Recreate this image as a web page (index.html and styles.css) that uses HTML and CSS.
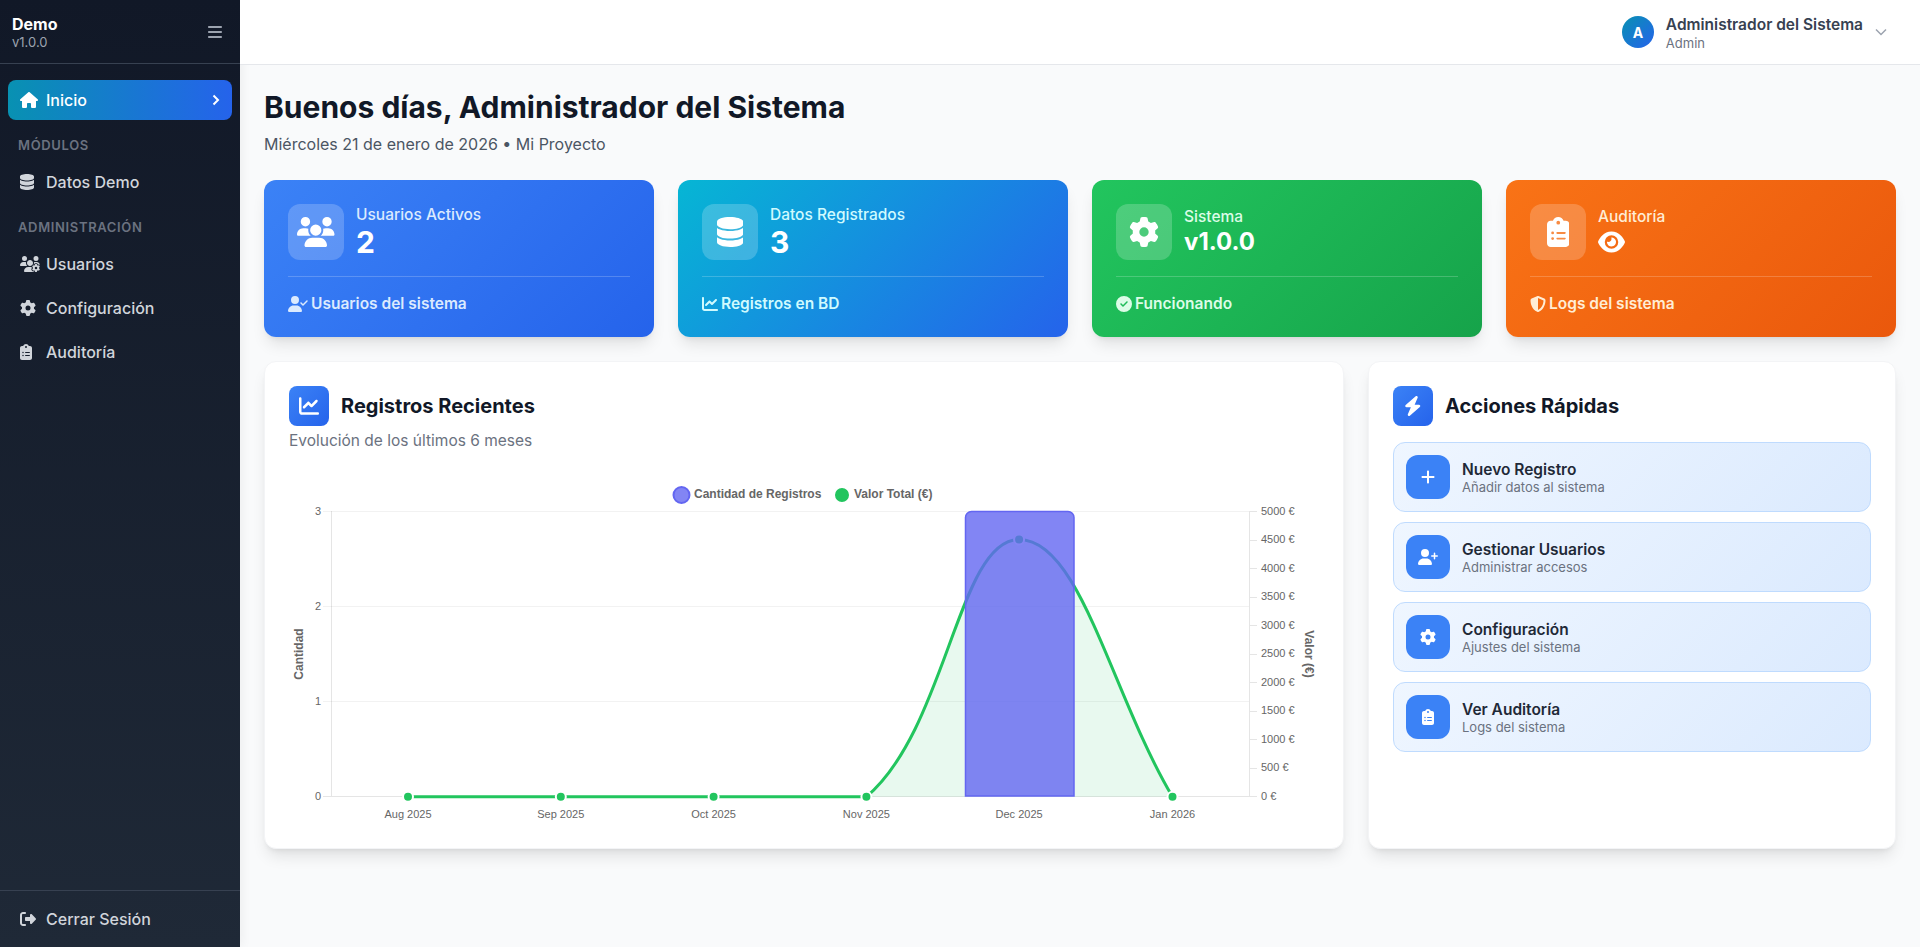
FILE: index.html
```html
<!DOCTYPE html>
<html lang="es">
<head>
    <meta charset="UTF-8">
    <meta name="viewport" content="width=device-width, initial-scale=1.0">
    <title>Demo - Inicio</title>
    <link rel="stylesheet" href="styles.css">
</head>
<body>
    <!-- icon shapes, reused below with <use> -->
    <svg class="sprite" aria-hidden="true">
        <defs>
            <path id="i-bars" d="M0 96C0 78.3 14.3 64 32 64H416c17.7 0 32 14.3 32 32s-14.3 32-32 32H32C14.3 128 0 113.7 0 96zM0 256c0-17.7 14.3-32 32-32H416c17.7 0 32 14.3 32 32s-14.3 32-32 32H32c-17.7 0-32-14.3-32-32zM448 416c0 17.7-14.3 32-32 32H32c-17.7 0-32-14.3-32-32s14.3-32 32-32H416c17.7 0 32 14.3 32 32z"/>
            <path id="i-home" d="M575.8 255.5c0 18-15 32.1-32 32.1h-32l.7 160.2c0 2.7-.2 5.4-.5 8.1V472c0 22.1-17.9 40-40 40H456c-1.1 0-2.2 0-3.3-.1c-1.4 .1-2.8 .1-4.2 .1H416 392c-22.1 0-40-17.9-40-40V448 384c0-17.7-14.3-32-32-32H256c-17.7 0-32 14.3-32 32v64 24c0 22.1-17.9 40-40 40H160 128.1c-1.5 0-3-.1-4.5-.2c-1.2 .1-2.4 .2-3.6 .2H104c-22.1 0-40-17.9-40-40V360c0-.9 0-1.9 .1-2.8V287.6H32c-18 0-32-14-32-32.1c0-9 3-17 10-24L266.4 8c7-7 15-8 22-8s15 2 21 7L564.8 231.5c8 7 12 15 11 24z"/>
            <path id="i-database" d="M448 80v48c0 44.2-100.3 80-224 80S0 172.2 0 128V80C0 35.8 100.3 0 224 0S448 35.8 448 80zM393.2 214.7c20.8-7.4 39.9-16.9 54.8-28.6V288c0 44.2-100.3 80-224 80S0 332.2 0 288V186.1c14.9 11.8 34 21.2 54.8 28.6C99.7 230.7 159.5 240 224 240s124.3-9.3 169.2-25.3zM0 346.1c14.9 11.8 34 21.2 54.8 28.6C99.7 390.7 159.5 400 224 400s124.3-9.3 169.2-25.3c20.8-7.4 39.9-16.9 54.8-28.6V432c0 44.2-100.3 80-224 80S0 476.2 0 432V346.1z"/>
            <path id="i-users-gear" d="M144 160A80 80 0 1 0 144 0a80 80 0 1 0 0 160zm368 0A80 80 0 1 0 512 0a80 80 0 1 0 0 160zM0 298.7C0 310.4 9.6 320 21.3 320H234.7c.2 0 .4 0 .7 0c-26.6-23.5-43.3-57.8-43.3-96c0-7.6 .7-15 1.9-22.3c-13.6-6.3-28.7-9.7-44.6-9.7H106.7C47.8 192 0 239.8 0 298.7zM320 320c24 0 45.9-8.8 62.7-23.3c2.5-3.7 5.2-7.3 8-10.7c2.7-3.3 5.7-6.1 9-8.3C410 262.3 416 243.9 416 224c0-53-43-96-96-96s-96 43-96 96s43 96 96 96zm65.4 60.2c-10.3-5.9-18.1-16.2-20.8-28.2H261.3C187.7 352 128 411.7 128 485.3c0 14.7 11.9 26.7 26.7 26.7H455.2c-2.1-5.2-3.2-10.9-3.2-16.4v-3c-1.3-.7-2.7-1.5-4-2.3l-2.6 1.5c-16.8 9.7-40.5 8-54.7-9.7c-4.5-5.6-8.6-11.5-12.4-17.6l-.1-.2-.1-.2-2.4-4.1-.1-.2-.1-.2c-3.4-6.2-6.4-12.6-9-19.3c-8.2-21.2 2.2-42.6 19-52.3l2.7-1.5c0-.8 0-1.5 0-2.3s0-1.5 0-2.3l-2.7-1.5zM533.3 192H490.7c-15.9 0-31 3.5-44.6 9.7c1.3 7.2 1.9 14.7 1.9 22.3c0 17.4-3.5 33.9-9.7 49c2.5 .9 4.9 2 7.2 3.3l2.6 1.5c1.3-.8 2.6-1.6 4-2.3v-3c0-19.4 13.3-39.1 35.8-42.6c7.9-1.2 16-1.9 24.2-1.9s16.3 .6 24.2 1.8c22.5 3.5 35.8 23.2 35.8 42.6v3c1.3 .7 2.7 1.5 4 2.3l2.6-1.5c16.8-9.7 40.5-8 54.7 9.7c2.3 2.8 4.5 5.8 6.6 8.7c-2.1-57.1-49-102.7-106.6-102.7zm91.3 163.9c6.3-3.6 9.5-11.1 6.8-18c-2.1-5.5-4.6-10.8-7.4-15.9l-2.3-4c-3.1-5.1-6.5-9.9-10.2-14.5c-4.6-5.7-12.7-6.7-19-3l-2.9 1.7c-9.2 5.3-20.4 4-29.6-1.3s-16.1-14.5-16.1-25.1v-3.4c0-7.3-4.9-13.8-12.1-14.9c-6.5-1-13.1-1.5-19.9-1.5s-13.4 .5-19.9 1.5c-7.2 1.1-12.1 7.6-12.1 14.9v3.4c0 10.6-6.9 19.8-16.1 25.1s-20.4 6.6-29.6 1.3l-2.9-1.7c-6.3-3.6-14.4-2.6-19 3c-3.7 4.6-7.1 9.5-10.2 14.6l-2.3 3.9c-2.8 5.1-5.3 10.4-7.4 15.9c-2.6 6.8 .5 14.3 6.8 17.9l2.9 1.7c9.2 5.3 13.7 15.8 13.7 26.4s-4.5 21.1-13.7 26.4l-3 1.7c-6.3 3.6-9.5 11.1-6.8 17.9c2.1 5.5 4.6 10.7 7.4 15.8l2.4 4.1c3 5.1 6.4 9.9 10.1 14.5c4.6 5.7 12.7 6.7 19 3l2.9-1.7c9.2-5.3 20.4-4 29.6 1.3s16.1 14.5 16.1 25.1v3.4c0 7.3 4.9 13.8 12.1 14.9c6.5 1 13.1 1.5 19.9 1.5s13.4-.5 19.9-1.5c7.2-1.1 12.1-7.6 12.1-14.9v-3.4c0-10.6 6.9-19.8 16.1-25.1s20.4-6.6 29.6-1.3l2.9 1.7c6.3 3.6 14.4 2.6 19-3c3.7-4.6 7.1-9.4 10.1-14.5l2.4-4.2c2.8-5.1 5.3-10.3 7.4-15.8c2.6-6.8-.5-14.3-6.8-17.9l-3-1.7c-9.2-5.3-13.7-15.8-13.7-26.4s4.5-21.1 13.7-26.4l3-1.7zM472 384a40 40 0 1 1 80 0 40 40 0 1 1 -80 0z"/>
            <path id="i-gear" d="M495.9 166.6c3.2 8.7 .5 18.4-6.4 24.6l-43.3 39.4c1.1 8.3 1.7 16.8 1.7 25.4s-.6 17.1-1.7 25.4l43.3 39.4c6.9 6.2 9.6 15.9 6.4 24.6c-4.4 11.9-9.7 23.3-15.8 34.3l-4.7 8.1c-6.6 11-14 21.4-22.1 31.2c-5.9 7.2-15.7 9.6-24.5 6.8l-55.7-17.7c-13.4 10.3-28.2 18.9-44 25.4l-12.5 57.1c-2 9.1-9 16.3-18.2 17.8c-13.8 2.3-28 3.5-42.5 3.5s-28.7-1.2-42.5-3.5c-9.2-1.5-16.2-8.7-18.2-17.8l-12.5-57.1c-15.8-6.5-30.6-15.1-44-25.4L83.1 425.9c-8.8 2.8-18.6 .3-24.5-6.8c-8.1-9.8-15.5-20.2-22.1-31.2l-4.7-8.1c-6.1-11-11.4-22.4-15.8-34.3c-3.2-8.7-.5-18.4 6.4-24.6l43.3-39.4C64.6 273.1 64 264.6 64 256s.6-17.1 1.7-25.4L22.4 191.2c-6.9-6.2-9.6-15.9-6.4-24.6c4.4-11.9 9.7-23.3 15.8-34.3l4.7-8.1c6.6-11 14-21.4 22.1-31.2c5.9-7.2 15.7-9.6 24.5-6.8l55.7 17.7c13.4-10.3 28.2-18.9 44-25.4l12.5-57.1c2-9.1 9-16.3 18.2-17.8C227.3 1.2 241.5 0 256 0s28.7 1.2 42.5 3.5c9.2 1.5 16.2 8.7 18.2 17.8l12.5 57.1c15.8 6.5 30.6 15.1 44 25.4l55.7-17.7c8.8-2.8 18.6-.3 24.5 6.8c8.1 9.8 15.5 20.2 22.1 31.2l4.7 8.1c6.1 11 11.4 22.4 15.8 34.3zM256 336a80 80 0 1 0 0-160 80 80 0 1 0 0 160z"/>
            <path id="i-clipboard" d="M192 0c-41.8 0-77.4 26.7-90.5 64H64C28.7 64 0 92.7 0 128V448c0 35.3 28.7 64 64 64H320c35.3 0 64-28.7 64-64V128c0-35.3-28.7-64-64-64H282.5C269.4 26.7 233.8 0 192 0zm0 64a32 32 0 1 1 0 64 32 32 0 1 1 0-64zM72 272a24 24 0 1 1 48 0 24 24 0 1 1 -48 0zm104-16H304c8.8 0 16 7.2 16 16s-7.2 16-16 16H176c-8.8 0-16-7.2-16-16s7.2-16 16-16zM72 368a24 24 0 1 1 48 0 24 24 0 1 1 -48 0zm88 0c0-8.8 7.2-16 16-16H304c8.8 0 16 7.2 16 16s-7.2 16-16 16H176c-8.8 0-16-7.2-16-16z"/>
            <path id="i-logout" d="M377.9 105.9L500.7 228.7c7.2 7.2 11.3 17.1 11.3 27.3s-4.1 20.1-11.3 27.3L377.9 406.1c-6.4 6.4-15 9.9-24 9.9c-18.7 0-33.9-15.2-33.9-33.9l0-62.1-128 0c-17.7 0-32-14.3-32-32l0-64c0-17.7 14.3-32 32-32l128 0 0-62.1c0-18.7 15.2-33.9 33.9-33.9c9 0 17.6 3.6 24 9.9zM160 96L96 96c-17.7 0-32 14.3-32 32l0 256c0 17.7 14.3 32 32 32l64 0c17.7 0 32 14.3 32 32s-14.3 32-32 32l-64 0c-53 0-96-43-96-96L0 128C0 75 43 32 96 32l64 0c17.7 0 32 14.3 32 32s-14.3 32-32 32z"/>
            <path id="i-users" d="M144 0a80 80 0 1 1 0 160A80 80 0 1 1 144 0zM512 0a80 80 0 1 1 0 160A80 80 0 1 1 512 0zM0 298.7C0 239.8 47.8 192 106.7 192h42.7c15.9 0 31 3.5 44.6 9.7c-1.3 7.2-1.9 14.7-1.9 22.3c0 38.2 16.8 72.5 43.3 96c-.2 0-.4 0-.7 0H21.3C9.6 320 0 310.4 0 298.7zM405.3 320c-.2 0-.4 0-.7 0c26.6-23.5 43.3-57.8 43.3-96c0-7.6-.7-15-1.9-22.3c13.6-6.3 28.7-9.7 44.6-9.7h42.7C592.2 192 640 239.8 640 298.7c0 11.8-9.6 21.3-21.3 21.3H405.3zM224 224a96 96 0 1 1 192 0 96 96 0 1 1 -192 0zM128 485.3C128 411.7 187.7 352 261.3 352H378.7C452.3 352 512 411.7 512 485.3c0 14.7-11.9 26.7-26.7 26.7H154.7c-14.7 0-26.7-11.9-26.7-26.7z"/>
            <path id="i-user-check" d="M96 128a128 128 0 1 1 256 0A128 128 0 1 1 96 128zM0 482.3C0 383.8 79.8 304 178.3 304h91.4C368.2 304 448 383.8 448 482.3c0 16.4-13.3 29.7-29.7 29.7H29.7C13.3 512 0 498.7 0 482.3zM625 177L497 305c-9.4 9.4-24.6 9.4-33.9 0l-64-64c-9.4-9.4-9.4-24.6 0-33.9s24.6-9.4 33.9 0l47 47L591 143c9.4-9.4 24.6-9.4 33.9 0s9.4 24.6 0 33.9z"/>
            <path id="i-user-plus" d="M96 128a128 128 0 1 1 256 0A128 128 0 1 1 96 128zM0 482.3C0 383.8 79.8 304 178.3 304h91.4C368.2 304 448 383.8 448 482.3c0 16.4-13.3 29.7-29.7 29.7H29.7C13.3 512 0 498.7 0 482.3zM504 312V248H440c-13.3 0-24-10.7-24-24s10.7-24 24-24h64V136c0-13.3 10.7-24 24-24s24 10.7 24 24v64h64c13.3 0 24 10.7 24 24s-10.7 24-24 24H552v64c0 13.3-10.7 24-24 24s-24-10.7-24-24z"/>
            <path id="i-chart" d="M64 64c0-17.7-14.3-32-32-32S0 46.3 0 64V400c0 44.2 35.8 80 80 80H480c17.7 0 32-14.3 32-32s-14.3-32-32-32H80c-8.8 0-16-7.2-16-16V64zm406.6 86.6c12.5-12.5 12.5-32.8 0-45.3s-32.8-12.5-45.3 0L320 210.7l-57.4-57.4c-12.5-12.5-32.8-12.5-45.3 0l-112 112c-12.5 12.5-12.5 32.8 0 45.3s32.8 12.5 45.3 0L240 221.3l57.4 57.4c12.5 12.5 32.8 12.5 45.3 0l128-128z"/>
            <path id="i-check" d="M256 512A256 256 0 1 0 256 0a256 256 0 1 0 0 512zM369 209L241 337c-9.4 9.4-24.6 9.4-33.9 0l-64-64c-9.4-9.4-9.4-24.6 0-33.9s24.6-9.4 33.9 0l47 47L335 175c9.4-9.4 24.6-9.4 33.9 0s9.4 24.6 0 33.9z"/>
            <path id="i-shield" d="M256 0c4.6 0 9.2 1 13.4 2.9L457.7 82.8c22 9.3 38.4 31 38.3 57.2c-.5 99.2-41.3 280.7-213.6 363.2c-16.7 8-36.1 8-52.8 0C57.3 420.7 16.5 239.2 16 140c-.1-26.2 16.3-47.9 38.3-57.2L242.7 2.9C246.8 1 251.4 0 256 0zm0 66.8V444.8C394 378 431.1 230.1 432 141.4L256 66.8l0 0z"/>
            <path id="i-eye" d="M288 32c-80.8 0-145.5 36.8-192.6 80.6C48.6 156 17.3 208 2.5 243.7c-3.3 7.9-3.3 16.7 0 24.6C17.3 304 48.6 356 95.4 399.4C142.5 443.2 207.2 480 288 480s145.5-36.8 192.6-80.6c46.8-43.5 78.1-95.4 93-131.1c3.3-7.9 3.3-16.7 0-24.6c-14.9-35.7-46.2-87.7-93-131.1C433.5 68.8 368.8 32 288 32zM144 256a144 144 0 1 1 288 0 144 144 0 1 1 -288 0zm144-64c0 35.3-28.7 64-64 64c-7.1 0-13.9-1.2-20.3-3.3c-5.5-1.8-11.9 1.6-11.7 7.4c.3 6.9 1.3 13.8 3.2 20.7c13.7 51.2 66.4 81.6 117.6 67.9s81.6-66.4 67.9-117.6c-11.1-41.5-47.8-69.4-88.6-71.1c-5.8-.2-9.2 6.1-7.4 11.7c2.1 6.4 3.3 13.2 3.3 20.3z"/>
            <path id="i-bolt" d="M349.4 44.6c5.9-13.7 1.5-29.7-10.6-38.5s-28.6-8-39.9 1.8l-256 224c-10 8.8-13.6 22.9-8.9 35.3S50.7 288 64 288H175.5L98.6 467.4c-5.9 13.7-1.5 29.7 10.6 38.5s28.6 8 39.9-1.8l256-224c10-8.8 13.6-22.9 8.9-35.3s-18.3-22.5-31.7-22.5H272.5L349.4 44.6z"/>
            <path id="i-plus" d="M256 80c0-17.7-14.3-32-32-32s-32 14.3-32 32V224H48c-17.7 0-32 14.3-32 32s14.3 32 32 32H192V432c0 17.7 14.3 32 32 32s32-14.3 32-32V288H400c17.7 0 32-14.3 32-32s-14.3-32-32-32H256V80z"/>
        </defs>
    </svg>

    <div class="layout">
        <aside class="sidebar">
            <div class="sidebar-head">
                <div>
                    <div class="brand">Demo</div>
                    <div class="brand-version">v1.0.0</div>
                </div>
                <svg class="menu-toggle" viewBox="0 0 448 512"><use href="#i-bars"/></svg>
            </div>

            <nav class="nav">
                <a class="nav-item active">
                    <span class="nav-icon"><svg viewBox="0 0 576 512"><use href="#i-home"/></svg></span>
                    <span>Inicio</span>
                    <svg class="nav-arrow" viewBox="0 0 8 12"><polyline points="1.5,1.5 6,6 1.5,10.5"/></svg>
                </a>
                <div class="nav-label">Módulos</div>
                <a class="nav-item">
                    <span class="nav-icon"><svg viewBox="0 0 448 512"><use href="#i-database"/></svg></span>
                    <span>Datos Demo</span>
                </a>
                <div class="nav-label">Administración</div>
                <a class="nav-item">
                    <span class="nav-icon"><svg viewBox="0 0 640 512"><use href="#i-users-gear"/></svg></span>
                    <span>Usuarios</span>
                </a>
                <a class="nav-item">
                    <span class="nav-icon"><svg viewBox="0 0 512 512"><use href="#i-gear"/></svg></span>
                    <span>Configuración</span>
                </a>
                <a class="nav-item">
                    <span class="nav-icon"><svg viewBox="0 0 384 512"><use href="#i-clipboard"/></svg></span>
                    <span>Auditoría</span>
                </a>
            </nav>

            <div class="sidebar-foot">
                <a class="nav-item">
                    <span class="nav-icon"><svg viewBox="0 0 512 512"><use href="#i-logout"/></svg></span>
                    <span>Cerrar Sesión</span>
                </a>
            </div>
        </aside>

        <div class="page">
            <header class="topbar">
                <div class="avatar">A</div>
                <div class="user-info">
                    <div class="user-name">Administrador del Sistema</div>
                    <div class="user-role">Admin</div>
                </div>
                <svg class="user-arrow" viewBox="0 0 12 8"><polyline points="1,1.5 6,6.5 11,1.5"/></svg>
            </header>

            <main class="content">
                <h1 class="greeting">Buenos días, Administrador del Sistema</h1>
                <p class="date">Miércoles 21 de enero de 2026 • Mi Proyecto</p>

                <section class="stats">
                    <div class="stat stat-blue">
                        <div class="stat-top">
                            <div class="stat-icon"><svg viewBox="0 0 640 512"><use href="#i-users"/></svg></div>
                            <div>
                                <div class="stat-label">Usuarios Activos</div>
                                <div class="stat-value">2</div>
                            </div>
                        </div>
                        <div class="stat-foot"><svg viewBox="0 0 640 512"><use href="#i-user-check"/></svg>Usuarios del sistema</div>
                    </div>
                    <div class="stat stat-cyan">
                        <div class="stat-top">
                            <div class="stat-icon"><svg viewBox="0 0 448 512"><use href="#i-database"/></svg></div>
                            <div>
                                <div class="stat-label">Datos Registrados</div>
                                <div class="stat-value">3</div>
                            </div>
                        </div>
                        <div class="stat-foot"><svg viewBox="0 0 512 512"><use href="#i-chart"/></svg>Registros en BD</div>
                    </div>
                    <div class="stat stat-green">
                        <div class="stat-top">
                            <div class="stat-icon"><svg viewBox="0 0 512 512"><use href="#i-gear"/></svg></div>
                            <div>
                                <div class="stat-label">Sistema</div>
                                <div class="stat-value small">v1.0.0</div>
                            </div>
                        </div>
                        <div class="stat-foot"><svg viewBox="0 0 512 512"><use href="#i-check"/></svg>Funcionando</div>
                    </div>
                    <div class="stat stat-orange">
                        <div class="stat-top">
                            <div class="stat-icon"><svg viewBox="0 0 384 512"><use href="#i-clipboard"/></svg></div>
                            <div>
                                <div class="stat-label">Auditoría</div>
                                <div class="stat-value small"><svg viewBox="0 0 576 512"><use href="#i-eye"/></svg></div>
                            </div>
                        </div>
                        <div class="stat-foot"><svg viewBox="0 0 512 512"><use href="#i-shield"/></svg>Logs del sistema</div>
                    </div>
                </section>

                <section class="panels">
                    <div class="panel">
                        <div class="panel-head">
                            <div class="panel-icon"><svg viewBox="0 0 512 512"><use href="#i-chart"/></svg></div>
                            <h2>Registros Recientes</h2>
                        </div>
                        <p class="panel-sub">Evolución de los últimos 6 meses</p>

                        <!-- viewBox uses page coordinates so the numbers line up with the plot -->
                        <svg class="chart" viewBox="289 464 1030 360" width="1030" height="360">
                            <g class="legend">
                                <circle class="bar-shape" cx="681.5" cy="495" r="8"/>
                                <text x="694" y="495">Cantidad de Registros</text>
                                <circle class="legend-green" cx="842" cy="495" r="8"/>
                                <text x="854" y="495">Valor Total (€)</text>
                            </g>

                            <path class="grid" d="M323 511.5H1249M323 606.5H1249M323 701.5H1249"/>
                            <path class="axis" d="M331.5 511V796M1249.5 511V796M323 796.5H1257M1249 511.5H1257M1249 540H1257M1249 568.5H1257M1249 597H1257M1249 625.5H1257M1249 654H1257M1249 682.5H1257M1249 711H1257M1249 739.5H1257M1249 768H1257"/>

                            <path class="area" d="M866.4 796.8C947.3 728.1 957.9 539.5 1019.1 539.5C1080.3 539.5 1111.1 693.4 1172.5 796.8Z"/>
                            <path class="line" d="M408 796.8H866.4C947.3 728.1 957.9 539.5 1019.1 539.5C1080.3 539.5 1111.1 693.4 1172.5 796.8"/>
                            <g class="points">
                                <circle cx="408" cy="796.8" r="5"/>
                                <circle cx="560.8" cy="796.8" r="5"/>
                                <circle cx="713.6" cy="796.8" r="5"/>
                                <circle cx="866.4" cy="796.8" r="5"/>
                                <circle cx="1019.1" cy="539.5" r="5"/>
                                <circle cx="1172.5" cy="796.8" r="5"/>
                            </g>
                            <path class="bar-shape bar" d="M965.5 796V517.5a6 6 0 0 1 6-6H1068a6 6 0 0 1 6 6V796Z"/>

                            <g class="ticks">
                                <text class="end" x="321" y="512">3</text>
                                <text class="end" x="321" y="607">2</text>
                                <text class="end" x="321" y="702">1</text>
                                <text class="end" x="321" y="797">0</text>
                                <text x="1261" y="512">5000 €</text>
                                <text x="1261" y="540.5">4500 €</text>
                                <text x="1261" y="569">4000 €</text>
                                <text x="1261" y="597.5">3500 €</text>
                                <text x="1261" y="626">3000 €</text>
                                <text x="1261" y="654.5">2500 €</text>
                                <text x="1261" y="683">2000 €</text>
                                <text x="1261" y="711.5">1500 €</text>
                                <text x="1261" y="740">1000 €</text>
                                <text x="1261" y="768.5">500 €</text>
                                <text x="1261" y="797">0 €</text>
                                <text class="mid" x="408" y="815">Aug 2025</text>
                                <text class="mid" x="560.8" y="815">Sep 2025</text>
                                <text class="mid" x="713.6" y="815">Oct 2025</text>
                                <text class="mid" x="866.4" y="815">Nov 2025</text>
                                <text class="mid" x="1019.1" y="815">Dec 2025</text>
                                <text class="mid" x="1172.5" y="815">Jan 2026</text>
                            </g>
                            <text class="axis-title" transform="translate(300 654) rotate(-90)">Cantidad</text>
                            <text class="axis-title" transform="translate(1308 654) rotate(90)">Valor (€)</text>
                        </svg>
                    </div>

                    <div class="panel">
                        <div class="panel-head actions-head">
                            <div class="panel-icon"><svg viewBox="0 0 448 512"><use href="#i-bolt"/></svg></div>
                            <h2>Acciones Rápidas</h2>
                        </div>
                        <div class="actions">
                            <a class="action">
                                <span class="action-icon"><svg viewBox="0 0 448 512"><use href="#i-plus"/></svg></span>
                                <span>
                                    <span class="action-title">Nuevo Registro</span>
                                    <span class="action-sub">Añadir datos al sistema</span>
                                </span>
                            </a>
                            <a class="action">
                                <span class="action-icon"><svg viewBox="0 0 640 512"><use href="#i-user-plus"/></svg></span>
                                <span>
                                    <span class="action-title">Gestionar Usuarios</span>
                                    <span class="action-sub">Administrar accesos</span>
                                </span>
                            </a>
                            <a class="action">
                                <span class="action-icon"><svg viewBox="0 0 512 512"><use href="#i-gear"/></svg></span>
                                <span>
                                    <span class="action-title">Configuración</span>
                                    <span class="action-sub">Ajustes del sistema</span>
                                </span>
                            </a>
                            <a class="action">
                                <span class="action-icon"><svg viewBox="0 0 384 512"><use href="#i-clipboard"/></svg></span>
                                <span>
                                    <span class="action-title">Ver Auditoría</span>
                                    <span class="action-sub">Logs del sistema</span>
                                </span>
                            </a>
                        </div>
                    </div>
                </section>
            </main>
        </div>
    </div>
</body>
</html>
```

FILE: styles.css
```css
* {
    box-sizing: border-box;
}
body {
    margin: 0;
    background-color: #f9fafb;
    color: #111827;
    font-family: "Inter", "Liberation Sans", sans-serif;
}
svg {
    fill: currentColor;
}
.sprite {
    display: none;
}
.layout {
    display: flex;
    min-height: 947px;
}

/* sidebar */
.sidebar {
    display: flex;
    flex-direction: column;
    flex: none;
    width: 240px;
    background: linear-gradient(180deg, #111827, #1f2937);
    box-shadow: 2px 0 10px rgba(0, 0, 0, 0.05);
}
.sidebar-head {
    display: flex;
    align-items: center;
    justify-content: space-between;
    height: 64px;
    padding: 0 18px 0 12px;
    border-bottom: 1px solid #374151;
}
.brand {
    color: #fff;
    font-size: 16px;
    font-weight: 700;
    line-height: 20px;
}
.brand-version {
    color: #9ca3af;
    font-size: 13px;
    line-height: 16px;
}
.menu-toggle {
    height: 16px;
    color: #9ca3af;
}
.nav {
    display: flex;
    flex: 1;
    flex-direction: column;
    gap: 4px;
    padding: 16px 8px;
}
.nav-item {
    display: flex;
    align-items: center;
    height: 40px;
    padding: 0 12px;
    border-radius: 8px;
    color: #d1d5db;
    font-size: 16px;
    font-weight: 500;
}
.nav-item.active {
    background: linear-gradient(90deg, #0891b2, #2563eb);
    color: #fff;
}
.nav-icon {
    display: flex;
    flex: none;
    width: 26px;
}
.nav-icon svg {
    height: 16px;
}
.nav-arrow {
    width: 8px;
    height: 12px;
    margin-left: auto;
    fill: none;
    stroke: currentColor;
    stroke-width: 2;
}
.nav-label {
    margin: 11px 0 3px;
    padding: 0 10px;
    color: #6b7280;
    font-size: 13px;
    font-weight: 600;
    line-height: 20px;
    letter-spacing: 0.05em;
    text-transform: uppercase;
}
.sidebar-foot {
    padding: 8px;
    border-top: 1px solid #374151;
}

/* top bar */
.page {
    flex: 1;
    min-width: 0;
}
.topbar {
    display: flex;
    align-items: center;
    justify-content: flex-end;
    height: 65px;
    padding: 0 33px 0 0;
    background-color: #fff;
    border-bottom: 1px solid #e5e7eb;
}
.avatar {
    display: flex;
    align-items: center;
    justify-content: center;
    width: 32px;
    height: 32px;
    margin-right: 12px;
    border-radius: 50%;
    background: linear-gradient(135deg, #0891b2, #2563eb);
    color: #fff;
    font-size: 14px;
    font-weight: 700;
}
.user-info {
    margin-top: 2px;
}
.user-name {
    color: #374151;
    font-size: 15.5px;
    font-weight: 600;
    line-height: 20px;
}
.user-role {
    color: #6b7280;
    font-size: 13px;
    line-height: 16px;
}
.user-arrow {
    width: 12px;
    height: 8px;
    margin-left: 12px;
    fill: none;
    stroke: #9ca3af;
    stroke-width: 1.5;
}

/* main content */
.content {
    padding: 24px;
}
.greeting {
    margin: 0 0 7px;
    color: #111827;
    font-size: 30px;
    font-weight: 700;
    line-height: 36px;
}
.date {
    margin: 0 0 24px;
    color: #4b5563;
    font-size: 16px;
    line-height: 24px;
}

/* stat cards */
.stats {
    display: grid;
    grid-template-columns: repeat(4, 1fr);
    gap: 24px;
    margin-bottom: 24px;
}
.stat {
    padding: 24px;
    border-radius: 12px;
    box-shadow: 0 10px 15px -3px rgba(0, 0, 0, 0.1), 0 4px 6px -4px rgba(0, 0, 0, 0.1);
    color: #fff;
}
.stat-blue {
    background: linear-gradient(135deg, #3b82f6, #2563eb);
    --soft: #dbeafe;
}
.stat-cyan {
    background: linear-gradient(135deg, #06b6d4, #2563eb);
    --soft: #cffafe;
}
.stat-green {
    background: linear-gradient(135deg, #22c55e, #16a34a);
    --soft: #dcfce7;
}
.stat-orange {
    background: linear-gradient(135deg, #f97316, #ea580c);
    --soft: #ffedd5;
}
.stat-top {
    display: flex;
    align-items: center;
    gap: 12px;
}
.stat-icon {
    display: flex;
    align-items: center;
    justify-content: center;
    width: 56px;
    height: 56px;
    border-radius: 12px;
    background-color: rgba(255, 255, 255, 0.2);
}
.stat-icon svg {
    height: 30px;
}
.stat-label {
    padding-top: 1px;
    color: var(--soft);
    font-size: 15.5px;
    font-weight: 500;
    line-height: 20px;
}
.stat-value {
    margin-top: -1px;
    font-size: 30px;
    font-weight: 700;
    line-height: 36px;
}
.stat-value.small {
    display: flex;
    align-items: center;
    height: 32px;
    font-size: 24px;
    line-height: 32px;
}
.stat-value svg {
    height: 24px;
}
.stat-foot {
    display: flex;
    align-items: center;
    gap: 3px;
    margin-top: 16px;
    padding-top: 17px;
    border-top: 1px solid rgba(255, 255, 255, 0.2);
    color: var(--soft);
    font-size: 15.5px;
    font-weight: 600;
    line-height: 19px;
}
.stat-foot svg {
    height: 16px;
}

/* lower panels */
.panels {
    display: grid;
    grid-template-columns: 1080px 1fr;
    gap: 24px;
}
.panel {
    padding: 24px;
    border: 1px solid #f3f4f6;
    border-radius: 12px;
    background-color: #fff;
    box-shadow: 0 10px 15px -3px rgba(0, 0, 0, 0.1), 0 4px 6px -4px rgba(0, 0, 0, 0.1);
}
.panel-head {
    display: flex;
    align-items: center;
    gap: 12px;
}
.panel-head h2 {
    margin: 0;
    color: #111827;
    font-size: 20px;
    font-weight: 700;
    line-height: 28px;
}
.panel-icon {
    display: flex;
    align-items: center;
    justify-content: center;
    width: 40px;
    height: 40px;
    border-radius: 8px;
    background: linear-gradient(135deg, #3b82f6, #2563eb);
    color: #fff;
}
.panel-icon svg {
    height: 20px;
}
.panel-sub {
    margin: 5px 0 13px;
    color: #6b7280;
    font-size: 15.5px;
    line-height: 20px;
}
.actions-head {
    margin-bottom: 16px;
}

/* chart */
.chart {
    display: block;
}
.legend text {
    fill: #666;
    font-family: "Liberation Sans", sans-serif;
    font-size: 12px;
    font-weight: 700;
    dominant-baseline: middle;
}
.legend-green {
    fill: #22c55e;
    stroke: #fff;
    stroke-width: 2;
}
.grid {
    fill: none;
    stroke: rgba(0, 0, 0, 0.05);
    shape-rendering: crispEdges;
}
.axis {
    fill: none;
    stroke: rgba(0, 0, 0, 0.1);
    shape-rendering: crispEdges;
}
.area {
    fill: rgba(34, 197, 94, 0.1);
}
.line {
    fill: none;
    stroke: #22c55e;
    stroke-width: 3;
}
.points circle {
    fill: #22c55e;
    stroke: #fff;
    stroke-width: 2;
}
.bar-shape {
    fill: rgba(99, 102, 241, 0.8);
    stroke: #6366f1;
    stroke-width: 2;
}
.bar {
    stroke-width: 1.5;
}
.ticks text {
    fill: #666;
    font-family: "Liberation Sans", sans-serif;
    font-size: 11px;
    dominant-baseline: middle;
}
.ticks .end {
    text-anchor: end;
}
.ticks .mid {
    text-anchor: middle;
}
.axis-title {
    fill: #666;
    font-family: "Liberation Sans", sans-serif;
    font-size: 12px;
    font-weight: 700;
    text-anchor: middle;
    dominant-baseline: middle;
}

/* quick actions */
.actions {
    display: flex;
    flex-direction: column;
    gap: 10px;
}
.action {
    display: flex;
    align-items: center;
    gap: 12px;
    padding: 12px;
    border: 1px solid #bfdbfe;
    border-radius: 12px;
    background: linear-gradient(135deg, #eff6ff, #dbeafe);
}
.action-icon {
    display: flex;
    align-items: center;
    justify-content: center;
    width: 44px;
    height: 44px;
    border-radius: 12px;
    background-color: #3b82f6;
    color: #fff;
}
.action-icon svg {
    height: 16px;
}
.action-title {
    display: block;
    padding-top: 1px;
    color: #1f2937;
    font-size: 15.5px;
    font-weight: 600;
    line-height: 20px;
}
.action-sub {
    display: block;
    margin-top: -1px;
    color: #6b7280;
    font-size: 13px;
    line-height: 16px;
}
```
